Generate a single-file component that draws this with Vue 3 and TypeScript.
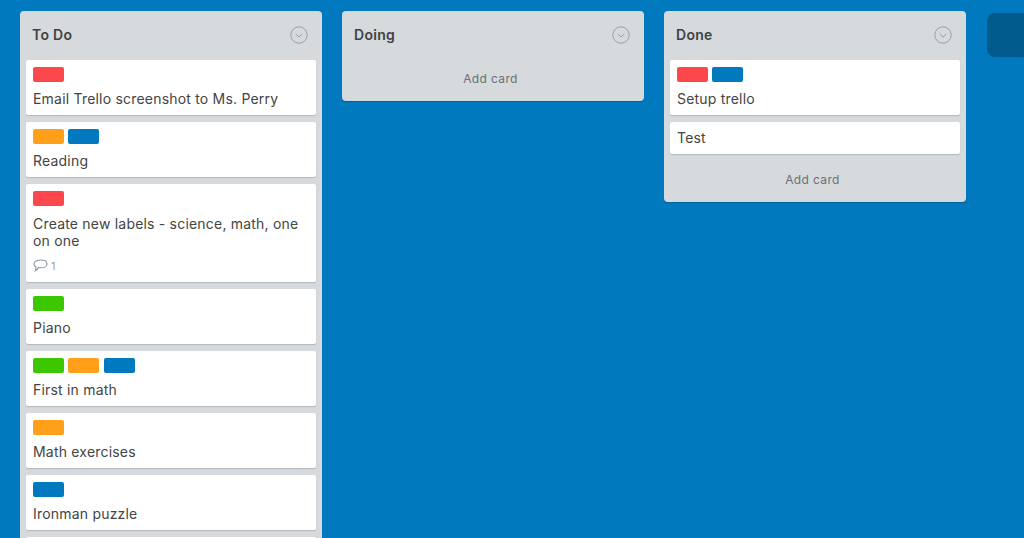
<script setup lang="ts">
interface Card { labels: string[]; title: string; comments?: number }
interface List { name: string; cards: Card[]; addCard: boolean }

const lists: List[] = [
  {
    name: 'To Do',
    addCard: false,
    cards: [
      { labels: ['red'], title: 'Email Trello screenshot to Ms. Perry' },
      { labels: ['orange', 'blue'], title: 'Reading' },
      { labels: ['red'], title: 'Create new labels - science, math, one on one', comments: 1 },
      { labels: ['green'], title: 'Piano' },
      { labels: ['green', 'orange', 'blue'], title: 'First in math' },
      { labels: ['orange'], title: 'Math exercises' },
      { labels: ['blue'], title: 'Ironman puzzle' },
      { labels: [], title: '' },
    ],
  },
  { name: 'Doing', addCard: true, cards: [] },
  {
    name: 'Done',
    addCard: true,
    cards: [
      { labels: ['red', 'blue'], title: 'Setup trello' },
      { labels: [], title: 'Test' },
    ],
  },
]
</script>

<template>
  <div class="board">
    <section v-for="list in lists" :key="list.name" class="list">
      <header class="list-head">
        <h2 class="list-name">{{ list.name }}</h2>
        <svg class="chev" width="18" height="18" viewBox="0 0 18 18" fill="none">
          <circle cx="9" cy="9" r="8.2" stroke="#9aa0a5" stroke-width="1" />
          <path d="M5.6 7.8 L9 11 L12.4 7.8" stroke="#9aa0a5" stroke-width="1" />
        </svg>
      </header>
      <div v-if="list.cards.length" class="cards">
        <article v-for="(card, i) in list.cards" :key="i" class="card" :class="{ 'has-meta': card.comments }">
          <div v-if="card.labels.length" class="labels">
            <span v-for="(l, j) in card.labels" :key="j" class="label" :class="l"></span>
          </div>
          <p class="title">{{ card.title }}</p>
          <div v-if="card.comments" class="meta">
            <svg width="15" height="13" viewBox="0 0 15 13" fill="none">
              <path d="M7.8 1 C11.2 1 14 2.5 14 4.9 C14 7.3 11.2 8.8 8 8.8 C7 8.8 6.2 8.7 5.4 8.5 C4.8 10 3.6 11.4 2.2 11.8 C2.9 10.6 3.1 9.2 2.9 7.9 C1.7 7.1 1 6.1 1 4.9 C1 2.5 4.4 1 7.8 1 Z" stroke="#8f979d" stroke-width="1.1" />
            </svg>
            <span>{{ card.comments }}</span>
          </div>
        </article>
      </div>
      <div class="add" v-if="list.addCard" :class="{ 'add-empty': !list.cards.length }">Add card</div>
    </section>
    <div class="new-list"></div>
  </div>
</template>

<style>
html, body { margin: 0; background: #0079bf; }
</style>

<style scoped>
.board {
  display: flex;
  align-items: flex-start;
  gap: 20px;
  width: 1024px;
  height: 538px;
  padding: 11px 0 0 20px;
  box-sizing: border-box;
  overflow: hidden;
  background: #0079bf;
  font-family: Inter, "Noto Sans", sans-serif;
}
.list {
  flex: 0 0 302px;
  box-sizing: border-box;
  background: #d6dadc;
  border-radius: 4px;
  padding: 0 6px;
  box-shadow: 0 1px 1px rgba(0, 0, 0, 0.2);
}
.list-head {
  display: flex;
  align-items: center;
  justify-content: space-between;
  height: 49px;
  padding: 0 8px 2px 6px;
  box-sizing: border-box;
}
.list-name {
  margin: 0;
  font-size: 14px;
  line-height: 18px;
  font-weight: 600;
  letter-spacing: 0.3px;
  color: #3f4245;
}
.chev { display: block; }
.cards {
  display: flex;
  flex-direction: column;
  gap: 7px;
}
.card {
  background: #fff;
  border-radius: 2px;
  padding: 7px 7px 8px;
  box-shadow: 0 1px 1px rgba(0, 0, 0, 0.16);
}
.labels {
  display: flex;
  gap: 4.3px;
  margin-bottom: 8px;
}
.has-meta .labels { margin-bottom: 9px; }
.label {
  width: 31px;
  height: 15px;
  border-radius: 2px;
}
.red { background: #fc474c; }
.orange { background: #ff9f1a; }
.blue { background: #0079bf; }
.green { background: #3dc700; }
.title {
  margin: 0;
  font-size: 14px;
  line-height: 17px;
  min-height: 17px;
  letter-spacing: 0.2px;
  color: #444;
}
.meta {
  display: flex;
  align-items: center;
  gap: 3px;
  margin: 9px 0 1px;
  height: 15px;
  font-size: 11px;
  color: #98a0a6;
}
.add {
  height: 42px;
  margin-top: 6px;
  padding: 0 5px 4px 0;
  box-sizing: border-box;
  display: flex;
  align-items: center;
  justify-content: center;
  font-size: 12px;
  letter-spacing: 0.35px;
  color: #6b6f73;
}
.add-empty { margin-top: -1px; }
.new-list {
  flex: 0 0 60px;
  height: 44px;
  margin: 2px 0 0 1px;
  border-radius: 8px;
  background: #005a8c;
}
</style>
